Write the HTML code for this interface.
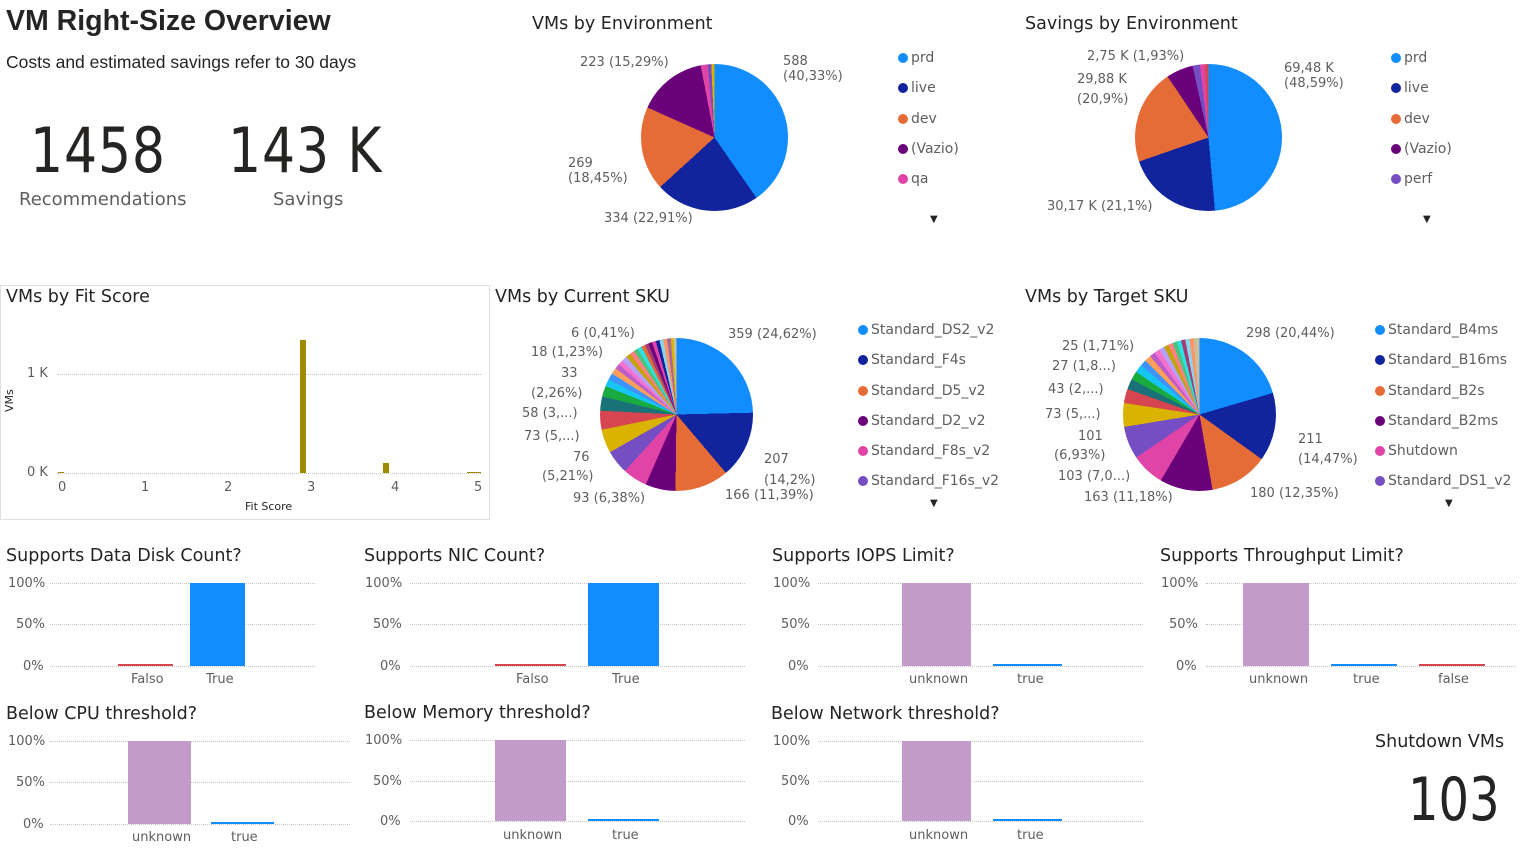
<!DOCTYPE html><html><head><meta charset="utf-8"><style>
*{margin:0;padding:0;box-sizing:border-box}
body{width:1523px;height:856px;background:#fff;position:relative;overflow:hidden;font-family:"DejaVu Sans","Liberation Sans",sans-serif;color:#252423}
.a{position:absolute;white-space:nowrap}
.t{font-size:17.5px;color:#252423}
.s{font-size:13px;color:#605e5c}
.l{font-size:14px;color:#605e5c}
.pie{position:absolute;border-radius:50%}
.dot{display:inline-block;width:10px;height:10px;border-radius:50%;margin-right:3px;vertical-align:-1px}
.g{position:absolute;height:0;border-top:1px dotted #c8c6c4}
.b{position:absolute}
.big{font-family:"DejaVu Sans",sans-serif;font-size:62px;transform:scaleX(0.84);transform-origin:left top;letter-spacing:1px}
</style></head><body>
<div class="a" style="left:6px;top:5px;font-size:28.5px;font-weight:bold;font-family:'Liberation Sans',sans-serif">VM Right-Size Overview</div>
<div class="a" style="left:6px;top:52px;font-size:17.5px;font-family:'Liberation Sans',sans-serif">Costs and estimated savings refer to 30 days</div>
<div class="a big" style="left:30px;top:114px">1458</div>
<div class="a" style="left:19px;top:189px;font-size:18px;color:#605e5c">Recommendations</div>
<div class="a big" style="left:228px;top:114px">143 K</div>
<div class="a" style="left:273px;top:189px;font-size:18px;color:#605e5c">Savings</div>

<div class="a t" style="left:532px;top:14px">VMs by Environment</div>
<div class="pie" style="left:641px;top:64px;width:147px;height:147px;background:conic-gradient(#118DFF 0 40.33%,#12239E 0 63.24%,#E66C37 0 81.69%,#6B007B 0 96.98%,#E044A7 0 98.5%,#744EC2 0 99.3%,#D9B300 0 100%)"></div>
<div class="a s" style="left:580px;top:55px">223 (15,29%)</div>
<div class="a s" style="left:783px;top:54px">588<br>(40,33%)</div>
<div class="a s" style="left:568px;top:156px">269<br>(18,45%)</div>
<div class="a s" style="left:604px;top:211px">334 (22,91%)</div>
<div class="a l" style="left:898px;top:43px;line-height:30.3px"><span class="dot" style="background:#118DFF"></span>prd<br><span class="dot" style="background:#12239E"></span>live<br><span class="dot" style="background:#E66C37"></span>dev<br><span class="dot" style="background:#6B007B"></span>(Vazio)<br><span class="dot" style="background:#E044A7"></span>qa</div>
<div class="a" style="left:930px;top:214px;font-size:10px;color:#252423">▼</div>

<div class="a t" style="left:1025px;top:14px">Savings by Environment</div>
<div class="pie" style="left:1135px;top:64px;width:147px;height:147px;background:conic-gradient(#118DFF 0 48.59%,#12239E 0 69.69%,#E66C37 0 90.59%,#6B007B 0 96.5%,#744EC2 0 98.1%,#E044A7 0 99.2%,#D64550 0 100%)"></div>
<div class="a s" style="left:1087px;top:49px">2,75 K (1,93%)</div>
<div class="a s" style="left:1077px;top:70px;line-height:20px">29,88 K<br>(20,9%)</div>
<div class="a s" style="left:1284px;top:61px">69,48 K<br>(48,59%)</div>
<div class="a s" style="left:1047px;top:199px">30,17 K (21,1%)</div>
<div class="a l" style="left:1391px;top:43px;line-height:30.3px"><span class="dot" style="background:#118DFF"></span>prd<br><span class="dot" style="background:#12239E"></span>live<br><span class="dot" style="background:#E66C37"></span>dev<br><span class="dot" style="background:#6B007B"></span>(Vazio)<br><span class="dot" style="background:#744EC2"></span>perf</div>
<div class="a" style="left:1423px;top:214px;font-size:10px">▼</div>

<div class="b" style="left:0;top:285px;width:490px;height:235px;border:1px solid #e1dfdd"></div>
<div class="a t" style="left:6px;top:287px">VMs by Fit Score</div>
<div class="g" style="left:57px;top:374px;width:424px"></div>
<div class="g" style="left:57px;top:473px;width:424px"></div>
<div class="a s" style="left:27px;top:366px">1 K</div>
<div class="a s" style="left:27px;top:465px">0 K</div>
<div class="a" style="left:3px;top:412px;font-size:11px;transform:rotate(-90deg);transform-origin:left top">VMs</div>
<div class="b" style="left:300px;top:340px;width:6px;height:133px;background:#A08A00"></div>
<div class="b" style="left:383px;top:463px;width:6px;height:10px;background:#A08A00"></div>
<div class="b" style="left:58px;top:472px;width:6px;height:1px;background:#A08A00"></div>
<div class="b" style="left:467px;top:472px;width:14px;height:1px;background:#A08A00"></div>
<div class="a s" style="left:58px;top:480px">0</div><div class="a s" style="left:141px;top:480px">1</div><div class="a s" style="left:224px;top:480px">2</div><div class="a s" style="left:307px;top:480px">3</div><div class="a s" style="left:391px;top:480px">4</div><div class="a s" style="left:474px;top:480px">5</div>
<div class="a" style="left:245px;top:500px;font-size:11px">Fit Score</div>

<div class="a t" style="left:495px;top:287px">VMs by Current SKU</div>
<div class="pie" style="left:600px;top:338px;width:153px;height:153px;background:conic-gradient(#118DFF 0 24.62%,#12239E 0 38.82%,#E66C37 0 50.21%,#6B007B 0 56.59%,#E044A7 0 61.8%,#744EC2 0 66.8%,#D9B300 0 71.8%,#D64550 0 75.8%,#197278 0 78.8%,#1AAB40 0 81.06%,#15C6F4 0 82.6%,#4092FF 0 84%,#FFA058 0 85.3%,#BE5DC9 0 86.4%,#F472D0 0 87.5%,#B5A1FF 0 88.6%,#C4A200 0 89.6%,#FF8080 0 90.6%,#48C480 0 91.5%,#2AE2E2 0 92.4%,#E66C37 0 93.2%,#A43B76 0 94%,#6B007B 0 94.8%,#E044A7 0 95.6%,#12239E 0 96.4%,#8AD4EB 0 97.2%,#FE9666 0 98%,#A66999 0 98.8%,#D9B300 0 99.4%,#c8c0a0 0 100%)"></div>
<div class="a s" style="left:571px;top:326px">6 (0,41%)</div>
<div class="a s" style="left:531px;top:345px">18 (1,23%)</div>
<div class="a s" style="left:561px;top:366px">33</div>
<div class="a s" style="left:531px;top:386px">(2,26%)</div>
<div class="a s" style="left:522px;top:406px">58 (3,...)</div>
<div class="a s" style="left:524px;top:429px">73 (5,...)</div>
<div class="a s" style="left:573px;top:450px">76</div>
<div class="a s" style="left:542px;top:469px">(5,21%)</div>
<div class="a s" style="left:573px;top:491px">93 (6,38%)</div>
<div class="a s" style="left:728px;top:327px">359 (24,62%)</div>
<div class="a s" style="left:764px;top:449px;line-height:21px">207<br>(14,2%)</div>
<div class="a s" style="left:725px;top:488px">166 (11,39%)</div>
<div class="a l" style="left:858px;top:315px;line-height:30.3px"><span class="dot" style="background:#118DFF"></span>Standard_DS2_v2<br><span class="dot" style="background:#12239E"></span>Standard_F4s<br><span class="dot" style="background:#E66C37"></span>Standard_D5_v2<br><span class="dot" style="background:#6B007B"></span>Standard_D2_v2<br><span class="dot" style="background:#E044A7"></span>Standard_F8s_v2<br><span class="dot" style="background:#744EC2"></span>Standard_F16s_v2</div>
<div class="a" style="left:930px;top:498px;font-size:10px">▼</div>

<div class="a t" style="left:1025px;top:287px">VMs by Target SKU</div>
<div class="pie" style="left:1123px;top:338px;width:153px;height:153px;background:conic-gradient(#118DFF 0 20.44%,#12239E 0 34.91%,#E66C37 0 47.26%,#6B007B 0 58.44%,#E044A7 0 65.5%,#744EC2 0 72.4%,#D9B300 0 77.4%,#D64550 0 80.4%,#197278 0 82.6%,#1AAB40 0 84.4%,#15C6F4 0 86.1%,#4092FF 0 87.5%,#FFA058 0 88.8%,#BE5DC9 0 90%,#F472D0 0 91.2%,#B5A1FF 0 92.3%,#C4A200 0 93.3%,#FF8080 0 94.3%,#48C480 0 95.2%,#2AE2E2 0 96.1%,#A43B76 0 97%,#8AD4EB 0 97.9%,#FE9666 0 98.8%,#c8c0a0 0 100%)"></div>
<div class="a s" style="left:1062px;top:339px">25 (1,71%)</div>
<div class="a s" style="left:1052px;top:359px">27 (1,8...)</div>
<div class="a s" style="left:1048px;top:382px">43 (2,...)</div>
<div class="a s" style="left:1045px;top:407px">73 (5,...)</div>
<div class="a s" style="left:1078px;top:429px">101</div>
<div class="a s" style="left:1054px;top:448px">(6,93%)</div>
<div class="a s" style="left:1058px;top:469px">103 (7,0...)</div>
<div class="a s" style="left:1084px;top:490px">163 (11,18%)</div>
<div class="a s" style="left:1246px;top:326px">298 (20,44%)</div>
<div class="a s" style="left:1298px;top:430px;line-height:20px">211<br>(14,47%)</div>
<div class="a s" style="left:1250px;top:486px">180 (12,35%)</div>
<div class="a l" style="left:1375px;top:315px;line-height:30.3px"><span class="dot" style="background:#118DFF"></span>Standard_B4ms<br><span class="dot" style="background:#12239E"></span>Standard_B16ms<br><span class="dot" style="background:#E66C37"></span>Standard_B2s<br><span class="dot" style="background:#6B007B"></span>Standard_B2ms<br><span class="dot" style="background:#E044A7"></span>Shutdown<br><span class="dot" style="background:#744EC2"></span>Standard_DS1_v2</div>
<div class="a" style="left:1445px;top:498px;font-size:10px">▼</div>

<div class="a t" style="left:6px;top:546px">Supports Data Disk Count?</div>
<div class="a t" style="left:364px;top:546px">Supports NIC Count?</div>
<div class="a t" style="left:772px;top:546px">Supports IOPS Limit?</div>
<div class="a t" style="left:1160px;top:546px">Supports Throughput Limit?</div>

<div class="a s" style="left:8px;top:576px">100%</div><div class="a s" style="left:16px;top:617px">50%</div><div class="a s" style="left:23px;top:659px">0%</div>
<div class="g" style="left:50px;top:583px;width:265px"></div><div class="g" style="left:50px;top:624px;width:265px"></div><div class="g" style="left:50px;top:666px;width:265px"></div>
<div class="b" style="left:118px;top:664px;width:55px;height:2px;background:#D64550"></div>
<div class="b" style="left:190px;top:583px;width:55px;height:83px;background:#118DFF"></div>
<div class="a s" style="left:131px;top:672px">Falso</div><div class="a s" style="left:206px;top:672px">True</div>

<div class="a s" style="left:365px;top:576px">100%</div><div class="a s" style="left:373px;top:617px">50%</div><div class="a s" style="left:380px;top:659px">0%</div>
<div class="g" style="left:410px;top:583px;width:335px"></div><div class="g" style="left:410px;top:624px;width:335px"></div><div class="g" style="left:410px;top:666px;width:335px"></div>
<div class="b" style="left:495px;top:664px;width:71px;height:2px;background:#D64550"></div>
<div class="b" style="left:588px;top:583px;width:71px;height:83px;background:#118DFF"></div>
<div class="a s" style="left:516px;top:672px">Falso</div><div class="a s" style="left:612px;top:672px">True</div>

<div class="a s" style="left:773px;top:576px">100%</div><div class="a s" style="left:781px;top:617px">50%</div><div class="a s" style="left:788px;top:659px">0%</div>
<div class="g" style="left:818px;top:583px;width:325px"></div><div class="g" style="left:818px;top:624px;width:325px"></div><div class="g" style="left:818px;top:666px;width:325px"></div>
<div class="b" style="left:902px;top:583px;width:69px;height:83px;background:#C39BCB"></div>
<div class="b" style="left:993px;top:664px;width:69px;height:2px;background:#118DFF"></div>
<div class="a s" style="left:909px;top:672px">unknown</div><div class="a s" style="left:1017px;top:672px">true</div>

<div class="a s" style="left:1161px;top:576px">100%</div><div class="a s" style="left:1169px;top:617px">50%</div><div class="a s" style="left:1176px;top:659px">0%</div>
<div class="g" style="left:1206px;top:583px;width:310px"></div><div class="g" style="left:1206px;top:624px;width:310px"></div><div class="g" style="left:1206px;top:666px;width:310px"></div>
<div class="b" style="left:1243px;top:583px;width:66px;height:83px;background:#C39BCB"></div>
<div class="b" style="left:1331px;top:664px;width:66px;height:2px;background:#118DFF"></div>
<div class="b" style="left:1419px;top:664px;width:66px;height:2px;background:#D64550"></div>
<div class="a s" style="left:1249px;top:672px">unknown</div><div class="a s" style="left:1353px;top:672px">true</div><div class="a s" style="left:1438px;top:672px">false</div>

<div class="a t" style="left:6px;top:704px">Below CPU threshold?</div>
<div class="a t" style="left:364px;top:703px">Below Memory threshold?</div>
<div class="a t" style="left:771px;top:704px">Below Network threshold?</div>

<div class="a s" style="left:8px;top:734px">100%</div><div class="a s" style="left:16px;top:775px">50%</div><div class="a s" style="left:23px;top:817px">0%</div>
<div class="g" style="left:50px;top:741px;width:300px"></div><div class="g" style="left:50px;top:782px;width:300px"></div><div class="g" style="left:50px;top:824px;width:300px"></div>
<div class="b" style="left:128px;top:741px;width:63px;height:83px;background:#C39BCB"></div>
<div class="b" style="left:211px;top:822px;width:63px;height:2px;background:#118DFF"></div>
<div class="a s" style="left:132px;top:830px">unknown</div><div class="a s" style="left:231px;top:830px">true</div>

<div class="a s" style="left:365px;top:733px">100%</div><div class="a s" style="left:373px;top:774px">50%</div><div class="a s" style="left:380px;top:814px">0%</div>
<div class="g" style="left:410px;top:740px;width:335px"></div><div class="g" style="left:410px;top:781px;width:335px"></div><div class="g" style="left:410px;top:821px;width:335px"></div>
<div class="b" style="left:495px;top:740px;width:71px;height:81px;background:#C39BCB"></div>
<div class="b" style="left:588px;top:819px;width:71px;height:2px;background:#118DFF"></div>
<div class="a s" style="left:503px;top:828px">unknown</div><div class="a s" style="left:612px;top:828px">true</div>

<div class="a s" style="left:773px;top:734px">100%</div><div class="a s" style="left:781px;top:774px">50%</div><div class="a s" style="left:788px;top:814px">0%</div>
<div class="g" style="left:818px;top:741px;width:325px"></div><div class="g" style="left:818px;top:781px;width:325px"></div><div class="g" style="left:818px;top:821px;width:325px"></div>
<div class="b" style="left:902px;top:741px;width:69px;height:80px;background:#C39BCB"></div>
<div class="b" style="left:993px;top:819px;width:69px;height:2px;background:#118DFF"></div>
<div class="a s" style="left:909px;top:828px">unknown</div><div class="a s" style="left:1017px;top:828px">true</div>

<div class="a t" style="left:1375px;top:732px">Shutdown VMs</div>
<div class="a" style="left:1408px;top:765px;font-size:60px;font-family:'DejaVu Sans',sans-serif;transform:scaleX(0.8);transform-origin:left top;color:#252423">103</div>
</body></html>
